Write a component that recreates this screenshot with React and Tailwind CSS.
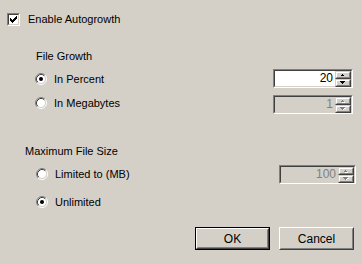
import React from 'react';

const Checkbox = ({ checked }) => (
  <div className="w-[13px] h-[13px] border border-t-[#808080] border-l-[#808080] border-b-white border-r-white">
    <div className="w-full h-full border border-t-[#404040] border-l-[#404040] border-b-[#d4d0c8] border-r-[#d4d0c8] bg-white">
      {checked ? (
        <svg width="9" height="9" viewBox="0 0 9 9" shapeRendering="crispEdges" className="block">
          <path
            d="M1 3h1v3H1zM2 4h1v3H2zM3 5h1v3H3zM4 4h1v3H4zM5 3h1v3H5zM6 2h1v3H6zM7 1h1v3H7z"
            fill="#000"
          />
        </svg>
      ) : null}
    </div>
  </div>
);

const Radio = ({ checked }) => (
  <svg width="12" height="12" viewBox="0 0 12 12" className="block shrink-0">
    <circle cx="6" cy="6" r="4.5" fill="#fff" />
    <path d="M2.11 9.89 A5.5 5.5 0 0 1 9.89 2.11" fill="none" stroke="#808080" />
    <path d="M9.89 2.11 A5.5 5.5 0 0 1 2.11 9.89" fill="none" stroke="#fff" />
    <path d="M2.82 9.18 A4.5 4.5 0 0 1 9.18 2.82" fill="none" stroke="#404040" />
    <path d="M9.18 2.82 A4.5 4.5 0 0 1 2.82 9.18" fill="none" stroke="#d4d0c8" />
    {checked ? <circle cx="6" cy="6" r="2" fill="#000" /> : null}
  </svg>
);

const Arrow = ({ up, disabled }) => (
  <svg width="6" height="4" viewBox="0 0 6 4" shapeRendering="crispEdges" className="block">
    {disabled ? (
      <path d={up ? 'M3 2h1v1H3zM2 3h3v1H2z' : 'M1 1h5v1H1zM3 2h1v1H3z'} fill="#fff" />
    ) : null}
    <path
      d={up ? 'M2 1h1v1H2zM1 2h3v1H1z' : 'M0 0h5v1H0zM1 1h3v1H1zM2 2h1v1H2z'}
      fill={disabled ? '#808080' : '#000'}
    />
  </svg>
);

const SpinButton = ({ up, disabled }) => (
  <div className="flex-1 border border-t-[#d4d0c8] border-l-[#d4d0c8] border-b-[#404040] border-r-[#404040]">
    <div className="w-full h-full border border-t-white border-l-white border-b-[#808080] border-r-[#808080] bg-[#d4d0c8] flex items-center justify-center">
      <Arrow up={up} disabled={disabled} />
    </div>
  </div>
);

const Spinner = ({ value, disabled, className }) => (
  <div className={`h-[19px] border border-t-[#808080] border-l-[#808080] border-b-white border-r-white ${className}`}>
    <div className="w-full h-full flex border border-t-[#404040] border-l-[#404040] border-b-[#d4d0c8] border-r-[#d4d0c8]">
      <div
        className={`flex-1 text-right pr-[2px] text-[12px] leading-[15px] ${disabled ? 'bg-[#d4d0c8] text-[#808080]' : 'bg-white text-black'}`}
      >
        {value}
      </div>
      <div className="w-[16px] flex flex-col">
        <SpinButton up disabled={disabled} />
        <SpinButton disabled={disabled} />
      </div>
    </div>
  </div>
);

const Button = ({ label, isDefault }) => (
  <div className={`w-[75px] h-[23px] ${isDefault ? 'border border-black' : ''}`}>
    <div className="w-full h-full border border-t-white border-l-white border-b-[#404040] border-r-[#404040]">
      <div className="w-full h-full border border-t-[#d4d0c8] border-l-[#d4d0c8] border-b-[#808080] border-r-[#808080] flex items-center justify-center text-[12px]">
        {label}
      </div>
    </div>
  </div>
);

export default function App() {
  return (
    <div className="w-[362px] h-[264px] bg-[#d4d0c8] text-black text-[11px] font-['Liberation_Sans',Arial,sans-serif] flex flex-col overflow-hidden">
      <div className="mt-[13px] ml-[7px] h-[13px] flex items-center gap-[8px]">
        <Checkbox checked />
        <span className="leading-[13px]">Enable Autogrowth</span>
      </div>

      <div className="mt-[24px] ml-[36px] h-[13px] leading-[13px]">File Growth</div>

      <div className="mt-[6px] h-[19px] flex">
        <div className="ml-[35px] mt-[4px] flex gap-[7px] h-[12px] leading-[12px]">
          <Radio checked />
          <span>In Percent</span>
        </div>
        <Spinner value="20" className="ml-auto mr-[9px] w-[80px]" />
      </div>

      <div className="mt-[7px] h-[19px] flex">
        <div className="ml-[35px] mt-[2px] flex gap-[7px] h-[12px] leading-[12px]">
          <Radio />
          <span>In Megabytes</span>
        </div>
        <Spinner value="1" disabled className="ml-auto mr-[9px] w-[80px]" />
      </div>

      <div className="mt-[31px] ml-[25px] h-[13px] leading-[13px]">Maximum File Size</div>

      <div className="mt-[7px] h-[19px] flex">
        <div className="ml-[36px] mt-[3px] flex gap-[7px] h-[12px] leading-[12px]">
          <Radio />
          <span>Limited to (MB)</span>
        </div>
        <Spinner value="100" disabled className="ml-auto mr-[6px] w-[77px]" />
      </div>

      <div className="mt-[12px] ml-[36px] flex gap-[7px] h-[12px] leading-[12px]">
        <Radio checked />
        <span>Unlimited</span>
      </div>

      <div className="mt-[19px] flex justify-end gap-[9px] pr-[8px]">
        <Button label="OK" isDefault />
        <Button label="Cancel" />
      </div>
    </div>
  );
}
